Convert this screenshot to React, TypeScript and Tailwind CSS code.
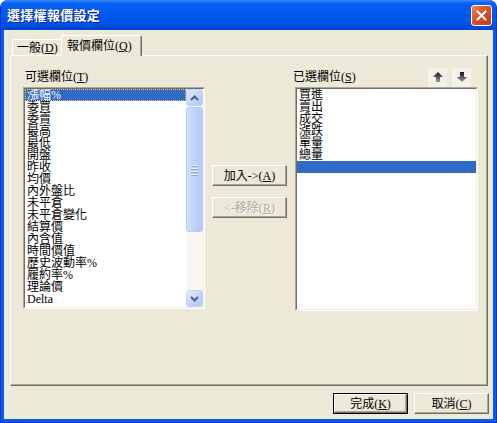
import React from 'react';

const leftItems = [
  '漲幅%', '委買', '委賣', '最高', '最低', '開盤', '昨收', '均價', '內外盤比', '未平倉',
  '未平倉變化', '結算價', '內含值', '時間價值', '歷史波動率%', '履約率%', '理論價', 'Delta', 'Gamma',
];
const rightItems = ['買進', '賣出', '成交', '漲跌', '單量', '總量'];

function Mn({ children }: { children: React.ReactNode }) {
  return <u className="underline underline-offset-[1px]">{children}</u>;
}

function Chevron({ down }: { down?: boolean }) {
  return (
    <svg width="9" height="6" viewBox="0 0 9 6">
      <polyline
        points={down ? '1,1 4.5,4.5 8,1' : '1,5 4.5,1.5 8,5'}
        fill="none"
        stroke="#4d6185"
        strokeWidth="2"
      />
    </svg>
  );
}

function ScrollBtn({ down }: { down?: boolean }) {
  return (
    <div className="w-[17px] h-[17px] rounded-[3px] border border-[#c3d3fd] bg-[linear-gradient(135deg,#e2eafe,#c1d3fb_60%,#b0c6f6)] flex items-center justify-center">
      <Chevron down={down} />
    </div>
  );
}

function Arrow({ down, id }: { down?: boolean; id: string }) {
  return (
    <svg width="10" height="10" viewBox="0 0 10 10">
      <defs>
        <linearGradient id={id} x1="0" y1="0" x2="0" y2="1">
          <stop offset="0" stopColor="#151515" />
          <stop offset="1" stopColor="#9a9a9a" />
        </linearGradient>
      </defs>
      <polygon
        points={down ? '3,0 7,0 7,5 10,5 5,10 0,5 3,5' : '5,0 10,5 7,5 7,10 3,10 3,5 0,5'}
        fill={`url(#${id})`}
      />
    </svg>
  );
}

function Btn({ children, disabled, def }: { children: React.ReactNode; disabled?: boolean; def?: boolean }) {
  const inner = (
    <div
      className={`h-full w-full flex items-center justify-center border border-t-white border-l-white border-r-[#716f64] border-b-[#716f64] shadow-[inset_-1px_-1px_0_#aca899] bg-[#ece9d8] ${
        disabled ? 'text-[#aca899] [text-shadow:1px_1px_0_#ffffff]' : 'text-black'
      }`}
    >
      {children}
    </div>
  );
  if (def) {
    return <div className="w-[75px] h-[21px] border border-black">{inner}</div>;
  }
  return <div className="w-[75px] h-[21px]">{inner}</div>;
}

export default function App() {
  return (
    <div className="w-[497px] h-[423px] bg-white font-['Liberation_Serif','Noto_Sans_CJK_TC',serif] text-[12px] leading-[12px] text-black select-none">
      <div className="w-full h-full flex flex-col rounded-t-[8px] overflow-hidden bg-[#0a5ae8] border-x border-b border-[#0831d9]">
        {/* Title bar */}
        <div className="h-[30px] flex-shrink-0 -mx-px flex items-center justify-between pl-[7px] pr-[5px] bg-[linear-gradient(180deg,#3c8efc_0%,#0a62f2_10%,#0058ee_45%,#0054e6_80%,#0043cf_100%)]">
          <span className="text-white font-bold text-[13px] font-['Noto_Sans_CJK_TC',sans-serif] [text-shadow:1px_1px_0_#0a1e8c] tracking-[0.3px]">
            選擇權報價設定
          </span>
          <div className="w-[21px] h-[21px] rounded-[3px] border border-white bg-[linear-gradient(135deg,#ea8465,#d9522c_45%,#c13b17)] flex items-center justify-center">
            <svg width="11" height="11" viewBox="0 0 11 11">
              <path d="M1.5 1.5 L9.5 9.5 M9.5 1.5 L1.5 9.5" stroke="#ffffff" strokeWidth="2" strokeLinecap="square" />
            </svg>
          </div>
        </div>

        {/* Body */}
        <div className="flex-1 mx-[3px] mb-[3px] bg-[#ece9d8] flex flex-col pt-[6px]">
          {/* Tabs */}
          <div className="h-[19px] flex items-end pl-[8px]">
            <div className="h-[16px] w-[50px] border-t border-l border-white rounded-tl-[2px] flex items-center pl-[4px] pt-[1px]">
              一般(<Mn>D</Mn>)
            </div>
            <div className="relative z-10 -mb-px -ml-px h-[21px] w-[81px] bg-[#ece9d8] border-t border-l border-white border-r border-r-[#716f64] shadow-[inset_-1px_0_0_#aca899] rounded-t-[2px] flex items-center pl-[5px]">
              報價欄位(<Mn>Q</Mn>)
            </div>
          </div>

          {/* Panel */}
          <div className="h-[331px] ml-[6px] mr-[5px] border-t border-l border-white border-r border-b border-r-[#716f64] border-b-[#716f64] shadow-[inset_-1px_-1px_0_#aca899] flex pt-[11px] pl-[12px]">
            {/* Left column */}
            <div className="w-[182px] flex flex-col">
              <div className="h-[20px] flex items-center pl-[2px]">
                可選欄位(<Mn>T</Mn>)
              </div>
              <div className="h-[222px] border border-t-[#aca899] border-l-[#aca899] border-r-white border-b-white">
                <div className="h-full border border-t-[#716f64] border-l-[#716f64] border-r-[#f1efe2] border-b-[#f1efe2] bg-white flex">
                  <div className="flex-1 overflow-hidden">
                    {leftItems.map((t, i) => (
                      <div
                        key={t}
                        className={`h-[12px] leading-[12px] pl-[2px] whitespace-nowrap ${
                          i === 0
                            ? 'bg-[#316ac5] text-white outline outline-1 outline-dotted -outline-offset-1 outline-[#e8c36a]'
                            : ''
                        }`}
                      >
                        {t}
                      </div>
                    ))}
                  </div>
                  <div className="w-[17px] flex flex-col bg-[#f7f6f1]">
                    <ScrollBtn />
                    <div className="mt-[1px] h-[125px] rounded-[3px] border border-[#b6cbf8] bg-[linear-gradient(90deg,#d2defd,#c1d3fb_50%,#b4c9f7)] flex flex-col items-center justify-center gap-[1px]">
                      <div className="w-[7px] h-[1px] bg-[#eef3fe] shadow-[0_1px_0_#8ca4e0]" />
                      <div className="w-[7px] h-[1px] mt-[1px] bg-[#eef3fe] shadow-[0_1px_0_#8ca4e0]" />
                      <div className="w-[7px] h-[1px] mt-[1px] bg-[#eef3fe] shadow-[0_1px_0_#8ca4e0]" />
                      <div className="w-[7px] h-[1px] mt-[1px] bg-[#eef3fe] shadow-[0_1px_0_#8ca4e0]" />
                    </div>
                    <div className="flex-1" />
                    <ScrollBtn down />
                  </div>
                </div>
              </div>
            </div>

            {/* Middle buttons */}
            <div className="ml-[7px] pt-[98px] flex flex-col gap-[13px]">
              <div className="h-[19px]">
                <Btn>
                  加入-&gt;(<Mn>A</Mn>)
                </Btn>
              </div>
              <div className="h-[19px]">
                <Btn disabled>
                  &lt;-移除(<Mn>R</Mn>)
                </Btn>
              </div>
            </div>

            {/* Right column */}
            <div className="ml-[8px] w-[183px] flex flex-col">
              <div className="h-[20px] flex items-center justify-between -ml-[2px] pr-[7px]">
                <span>
                  已選欄位(<Mn>S</Mn>)
                </span>
                <div className="flex gap-[5px]">
                  <div className="w-[19px] h-[19px] bg-[#f2f1ea] flex items-center justify-center">
                    <Arrow id="aup" />
                  </div>
                  <div className="w-[19px] h-[19px] bg-[#f2f1ea] flex items-center justify-center">
                    <Arrow id="adn" down />
                  </div>
                </div>
              </div>
              <div className="h-[224px] border border-t-[#aca899] border-l-[#aca899] border-r-white border-b-white">
                <div className="h-full border border-t-[#716f64] border-l-[#716f64] border-r-[#f1efe2] border-b-[#f1efe2] bg-white">
                  {rightItems.map((t) => (
                    <div key={t} className="h-[12px] leading-[12px] pl-[2px]">
                      {t}
                    </div>
                  ))}
                  <div className="h-[12px] bg-[#316ac5]" />
                </div>
              </div>
            </div>
          </div>

          {/* Bottom buttons */}
          <div className="mt-[7px] h-[21px] flex justify-end gap-[6px] pr-[4px]">
            <Btn def>
              完成(<Mn>K</Mn>)
            </Btn>
            <Btn>
              取消(<Mn>C</Mn>)
            </Btn>
          </div>
        </div>
      </div>
    </div>
  );
}
